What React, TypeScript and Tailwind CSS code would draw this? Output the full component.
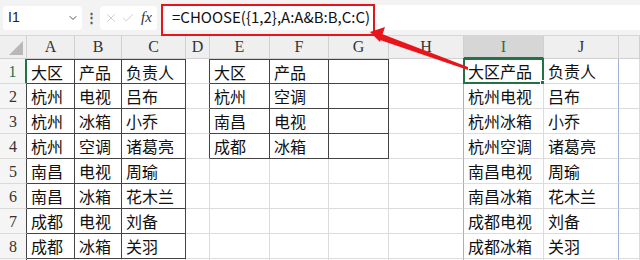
import { ChevronDown, X, Check } from 'lucide-react';

const cols = [
  { key: 'A', w: 'w-[48px]' },
  { key: 'B', w: 'w-[47px]' },
  { key: 'C', w: 'w-[64px]' },
  { key: 'D', w: 'w-[24px]' },
  { key: 'E', w: 'w-[60px]' },
  { key: 'F', w: 'w-[59px]' },
  { key: 'G', w: 'w-[60px]' },
  { key: 'H', w: 'w-[75px]' },
  { key: 'I', w: 'w-[80px]' },
  { key: 'J', w: 'w-[75px]' },
  { key: 'K', w: 'w-[21px]' },
];

const data: Record<string, string[]> = {
  A: ['大区', '杭州', '杭州', '杭州', '南昌', '南昌', '成都', '成都'],
  B: ['产品', '电视', '冰箱', '空调', '电视', '冰箱', '电视', '冰箱'],
  C: ['负责人', '吕布', '小乔', '诸葛亮', '周瑜', '花木兰', '刘备', '关羽'],
  E: ['大区', '杭州', '南昌', '成都'],
  F: ['产品', '空调', '电视', '冰箱'],
  I: ['大区产品', '杭州电视', '杭州冰箱', '杭州空调', '南昌电视', '南昌冰箱', '成都电视', '成都冰箱'],
  J: ['负责人', '吕布', '小乔', '诸葛亮', '周瑜', '花木兰', '刘备', '关羽'],
};

const cjk = "font-['Noto_Sans_CJK_SC','Noto_Sans',sans-serif]";
const serif = "font-['Liberation_Serif',serif]";

function inBox(col: string, row: number) {
  if (row > 8) return false;
  if (['A', 'B', 'C'].includes(col)) return true;
  if (['E', 'F', 'G'].includes(col) && row <= 4) return true;
  return false;
}

function Cell({ col, w, row }: { col: string; w: string; row: number }) {
  const boxed = inBox(col, row);
  const rightDark = boxed || (col === 'D' && row <= 4);
  const rightBlue = col === 'H' || col === 'J';
  const text = data[col]?.[row - 1] ?? '';
  const selected = col === 'I' && row === 1;
  return (
    <div
      className={[
        w,
        'relative h-full shrink-0 border-r border-b bg-white',
        rightBlue ? 'border-r-[#9fb0d6]' : rightDark ? 'border-r-[#444]' : 'border-r-[#dcdcdc]',
        boxed ? 'border-b-[#444]' : 'border-b-[#dcdcdc]',
        boxed && row === 1 ? 'border-t border-t-[#444]' : '',
        'flex items-center pl-[4px] text-[16px] text-[#111] whitespace-nowrap overflow-visible',
        cjk,
      ].join(' ')}
    >
      {text}
      {selected && (
        <div className="absolute -left-px -top-px -right-px -bottom-px border-2 border-[#217346]">
          <div className="absolute -right-[3px] -bottom-[3px] w-[5px] h-[5px] bg-[#217346] border border-white" />
        </div>
      )}
    </div>
  );
}

export default function App() {
  return (
    <div className="relative w-[640px] h-[260px] overflow-hidden bg-white">
      {/* formula bar */}
      <div className="h-[36px] bg-[#f3f3f3] flex items-center pl-[3px] border-b border-[#d6d6d6]">
        <div className="w-[79px] h-[24px] bg-white rounded-[4px] flex items-center justify-between pl-[5px] pr-[3px]">
          <span className="text-[14px] text-[#222] font-['Liberation_Sans',sans-serif]">I1</span>
          <ChevronDown className="w-[12px] h-[12px] text-[#555]" strokeWidth={2} />
        </div>
        <div className="w-[18px] flex justify-center text-[#555] text-[13px] font-bold leading-none">⋮</div>
        <div className="w-[57px] h-[24px] bg-white rounded-[4px] flex items-center px-[4px] gap-[3px]">
          <X className="w-[14px] h-[14px] text-[#c8c8c8]" strokeWidth={1.5} />
          <Check className="w-[14px] h-[14px] text-[#c8c8c8]" strokeWidth={1.5} />
          <span className="ml-[3px] text-[15px] italic text-[#333] font-['Liberation_Serif',serif]">fx</span>
        </div>
        <div className={`ml-[5px] flex-1 h-[25px] bg-white flex items-center pl-[10px] text-[15px] text-[#111] ${cjk}`}>
          =CHOOSE({'{'}1,2{'}'},A:A&amp;B:B,C:C)
        </div>
      </div>

      {/* column header */}
      <div className="flex h-[23px] bg-[#efefef]">
        <div className="w-[27px] shrink-0 border-r border-b border-[#d0d0d0] relative">
          <div className="absolute right-[3px] bottom-[3px] w-0 h-0 border-l-[14px] border-l-transparent border-b-[14px] border-b-[#b8b8b8]" />
        </div>
        {cols.map((c) => (
          <div
            key={c.key}
            className={[
              c.w,
              'shrink-0 border-r border-b border-r-[#d0d0d0] flex items-center justify-center text-[16px]',
              serif,
              c.key === 'I' ? 'bg-[#d6d6d6] text-[#217346] border-b-2 border-b-[#217346]' : 'text-[#333] border-b-[#d0d0d0]',
            ].join(' ')}
          >
            {c.key === 'K' ? '' : c.key}
          </div>
        ))}
      </div>

      {/* rows */}
      {[1, 2, 3, 4, 5, 6, 7, 8, 9].map((r) => (
        <div key={r} className="flex h-[25px]">
          <div
            className={[
              'w-[27px] shrink-0 bg-[#f5f5f5] border-b border-b-[#dadada] border-r flex items-center justify-center text-[16px] pt-[2px]',
              serif,
              r === 1 ? 'border-r-2 border-r-[#217346] text-[#217346]' : 'border-r-[#444] text-[#333]',
            ].join(' ')}
          >
            {r <= 8 ? r : ''}
          </div>
          {cols.map((c) => (
            <Cell key={c.key} col={c.key} w={c.w} row={r} />
          ))}
        </div>
      ))}

      {/* annotation: red box around formula */}
      <div className="absolute left-[161px] top-[4px] w-[214px] h-[32px] border-2 border-[#e8141b] pointer-events-none" />

      {/* annotation: arrow */}
      <svg className="absolute left-0 top-0 pointer-events-none" width="640" height="260">
        <polygon points="468,67 468,70 380,40 382,34" fill="#e8141b" />
        <polygon points="370,32 385,27 380,42" fill="#e8141b" />
      </svg>
    </div>
  );
}
